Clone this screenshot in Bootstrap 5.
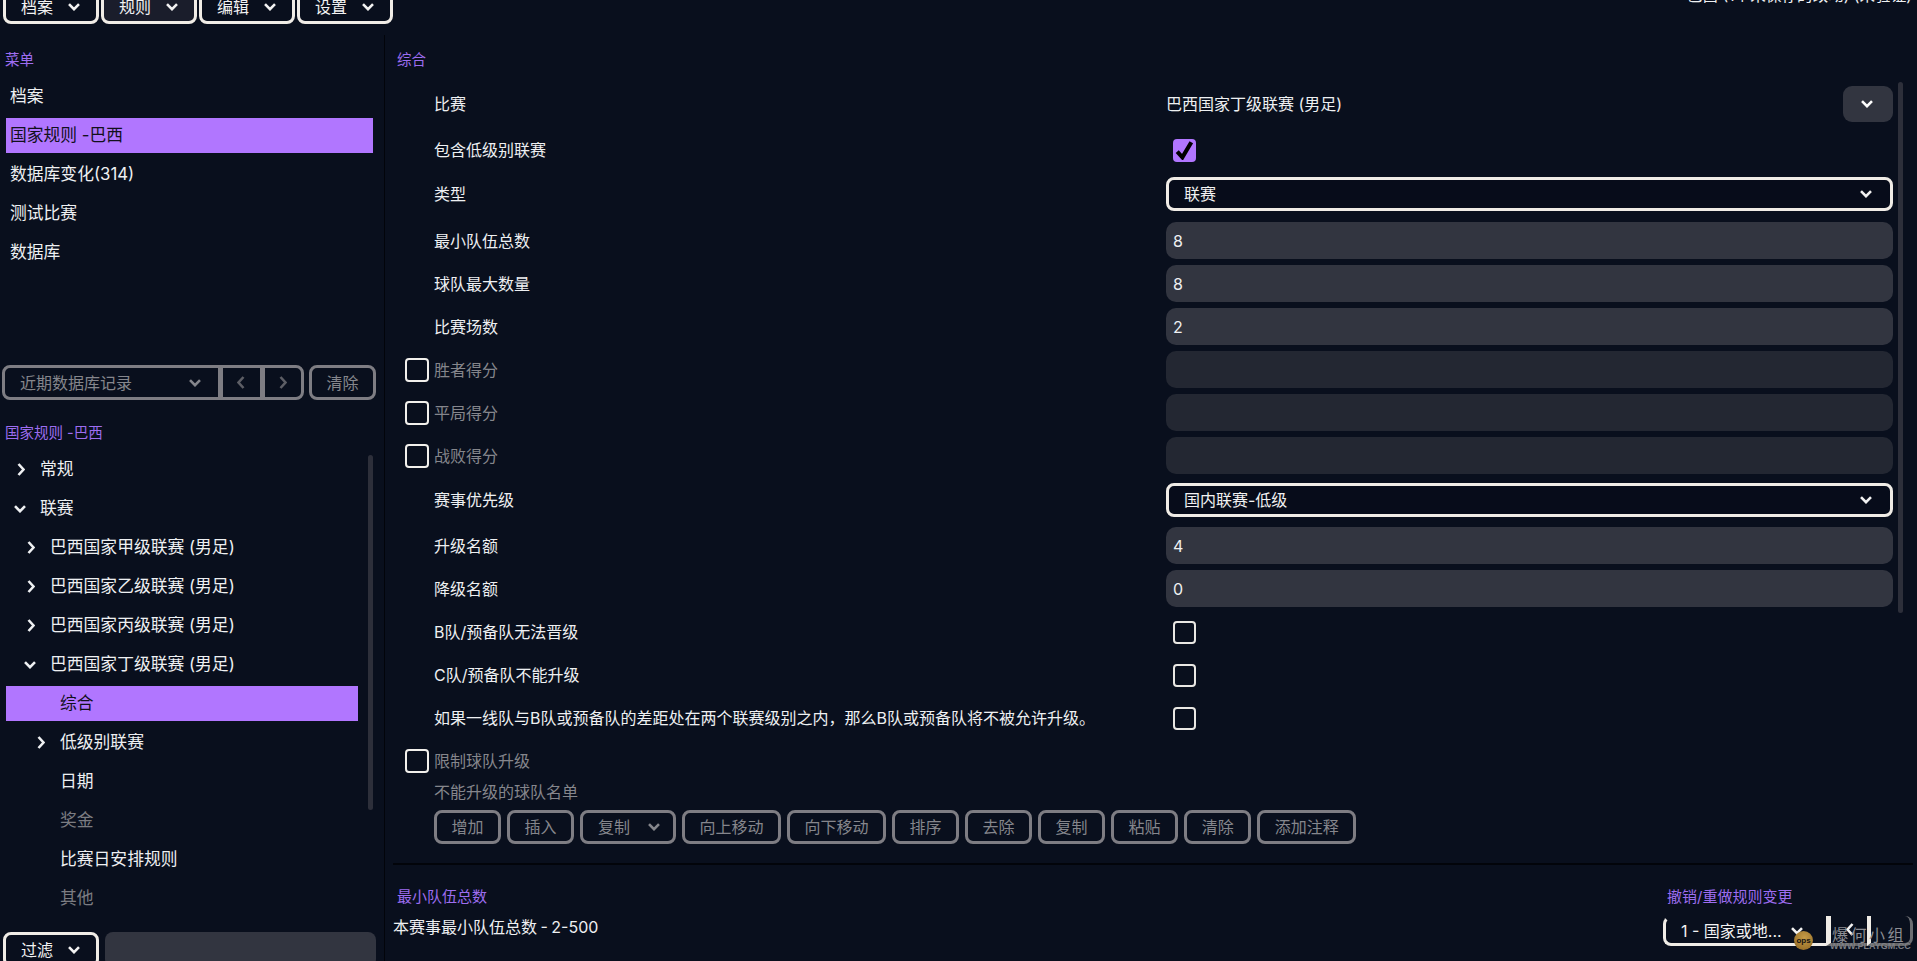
<!DOCTYPE html>
<html lang="zh-CN">
<head>
<meta charset="utf-8">
<title>规则</title>
<link href="https://cdn.jsdelivr.net/npm/bootstrap@5.3.0/dist/css/bootstrap.min.css" rel="stylesheet">
<style>
:root{--accent:#b176ff;--page:#090f1d;--fill:#323540;--fill-off:#232732;--line:#f0ece6;--off:#7e7d83;--off-text:#85868c;}
html,body{height:100%;}
body{background:var(--page);color:#eef0f2;font-family:Inter,"Noto Sans CJK SC",sans-serif;font-size:16px;overflow:hidden;}
.shell{height:961px;overflow:hidden;}
.topbar{height:35px;padding:0 5px 0 3px;}
.topgroup{margin-top:-11px;gap:2px;}
.bt{--bs-btn-color:#f2f2f2;--bs-btn-bg:transparent;--bs-btn-border-color:var(--line);--bs-btn-border-width:3px;--bs-btn-border-radius:8px;--bs-btn-font-size:16px;--bs-btn-padding-y:0;--bs-btn-padding-x:14.5px;--bs-btn-hover-color:#f2f2f2;--bs-btn-hover-bg:transparent;--bs-btn-hover-border-color:var(--line);height:34px;line-height:1;display:inline-flex;align-items:center;justify-content:center;white-space:nowrap;}
.bt-top{width:96px;height:35px;justify-content:space-between;padding:0 16px 0 15px;}
.bt-hover{--bs-btn-bg:#1a1d2b;--bs-btn-hover-bg:#1a1d2b;}
.bt-off{--bs-btn-color:var(--off-text);--bs-btn-border-color:var(--off);--bs-btn-hover-color:var(--off-text);--bs-btn-hover-border-color:var(--off);}
.cv{width:12px;height:8px;flex:none;fill:none;stroke:currentColor;stroke-width:2.6;}
.cv-side{width:8px;height:13px;flex:none;fill:none;stroke:currentColor;stroke-width:2.6;}
.topnote{margin-top:-16px;line-height:24px;font-size:15.6px;white-space:nowrap;}
.sidepane{width:385px;flex:none;border-right:1px solid #02040a;height:926px;padding-top:13px;position:relative;}
.paneltitle{color:#9d6df0;font-size:14.5px;line-height:24px;}
.sidepane>.paneltitle{margin-left:5px;}
.menulist{margin:7px 11px 0 6px;height:286px;}
.rowitem{height:35px;margin-bottom:4px;display:flex;align-items:center;font-size:16.8px;white-space:nowrap;}
.rowitem.on{background:var(--accent);color:#12101c;}
.menulist .rowitem{padding-left:4px;}
.histgroup{margin-left:2px;}
.histgroup .btn-group{width:302px;}
.bt-hist{width:219px;height:35px;justify-content:space-between;padding:0 17px 0 15px;}
.bt-nav{width:42px;height:35px;padding:0;--bs-btn-color:#5d5e65;--bs-btn-hover-color:#5d5e65;}
.bt-clear{width:67px;height:35px;margin-left:5px;padding:0;}
.tree-title{margin:21px 0 7px 5px;}
.treewrap{height:480px;}
.treelist{margin:0 26px 0 6px;}
.arrow{width:34px;padding-left:11px;flex:none;display:flex;}
.arrow .cv{margin-left:-3px;}
.lv1{padding-left:0;}
.lv2{padding-left:10px;}
.lv3{padding-left:20px;}
.dim{color:#7b7c82;}
.vbar{position:absolute;background:#2d2f3a;border-radius:3px;width:5px;}
.vbar-left{right:11px;top:420px;height:355px;}
.vbar-right{right:14px;top:47px;height:531px;}
.filterrow{margin:0 8px 0 3px;gap:6px;}
.bt-filter{width:96px;height:35px;justify-content:space-between;padding:0 16px 0 15px;}
.searchbox{flex:1;height:35px;background:var(--fill);border-radius:8px;}
.mainpane{flex:1;padding-top:13px;position:relative;min-width:0;height:926px;}
.mainpane>.paneltitle{margin-left:12px;}
.formrows{margin-left:20px;}
.frow{display:flex;align-items:center;white-space:nowrap;}
.slot{width:29px;flex:none;display:flex;}
.flabel{width:732px;flex:none;line-height:24px;}
.fctrl{width:727px;flex:none;}
.field{width:100%;height:37px;background:var(--fill);border:0;border-radius:10px;color:#eef0f2;padding:0 7px;font-size:16px;display:block;}
.field:disabled{background:var(--fill-off);}
.field:focus{outline:0;}
.bt-select{width:100%;justify-content:space-between;padding:0 18px 0 15px;height:34px;background:#070c1a;}
.plainselect{height:36px;display:flex;align-items:center;justify-content:space-between;}
.minibtn{width:50px;height:36px;background:var(--fill);border-radius:9px;color:#fff;display:flex;align-items:center;justify-content:center;padding-right:2px;}
input.tick{width:23px;height:23px;margin:0;flex:none;background-color:transparent;border:2px solid #e9e7e3;border-radius:5px;box-shadow:none;}
.slot input.tick{border-color:#f2f0ec;width:24px;height:24px;margin-left:0;}
input.tick:checked{background-color:var(--accent);border-color:var(--accent);background-size:22px;background-image:url("data:image/svg+xml,%3csvg xmlns='http://www.w3.org/2000/svg' viewBox='0 0 24 24'%3e%3cpath fill='none' stroke='%23000' stroke-width='4.4' d='M4 13l5.5 6L19 3'/%3e%3c/svg%3e");}
.tickpad{padding-left:7px;display:flex;}
.lbl-off{color:var(--off-text);}
.m6{margin-top:6px;}.m9{margin-top:9px;}.m10{margin-top:10px;}.m11{margin-top:11px;}.m13{margin-top:13px;}.m15{margin-top:15px;}.m16{margin-top:16px;}.m19{margin-top:19px;}.m7{margin-top:7px;}.first{margin-top:14px;}
.btnrow{margin-left:29px;margin-top:6px;gap:6px;}
.bt-wide{width:96px;padding:0 13px 0 15px;justify-content:space-between;}
.divline{height:2px;background:#02040a;margin:19px 4px 0 8px;}
.foot{padding:20px 4px 0 8px;}
.foot .paneltitle{margin-left:4px;font-size:15px;}
.footdesc{margin-top:6px;line-height:24px;word-spacing:-1px;}
.undo{width:250px;}
.undotitle{margin:0 0 7px 4px;line-height:24px;}
.undogroup{width:250px;height:30px;}
.undogroup .bt{height:30px;flex:none;}
.undogroup .u1{width:164px;justify-content:space-between;padding:0 24px 0 15px;border-top-color:transparent;border-right:0;}
.undogroup .u2{width:42px;margin-left:0;padding:0;border-top:0;border-left:5px solid var(--line);border-right:0;border-bottom-color:#666;}
.undogroup .u3{flex:1 1 auto;margin-left:0;padding:0;border-top:0;border-left:4px solid var(--line);border-right-color:#6d6e73;border-bottom-color:#666;}
.wm-ball{position:absolute;left:1794px;top:931px;width:19px;height:19px;border-radius:50%;background:radial-gradient(circle at 55% 35%,#c69b47,#8b6420);color:#111;font:700 8px/19px "Liberation Sans",sans-serif;text-align:center;}
.wm-name{position:absolute;left:1832px;top:923px;color:#8d8e94;font-size:16px;line-height:22px;letter-spacing:2.5px;font-family:"Noto Sans CJK SC",serif;white-space:nowrap;}
.wm-url{position:absolute;left:1830px;top:940px;color:#7f8086;font:700 9px/12px "Liberation Sans",sans-serif;white-space:nowrap;}
</style>
</head>
<body>
<svg width="0" height="0" class="position-absolute">
  <symbol id="down" viewBox="0 0 12 8"><path d="M1 1.2l5 5 5-5"/></symbol>
  <symbol id="right" viewBox="0 0 8 13"><path d="M1.5 1l5 5.5-5 5.5"/></symbol>
  <symbol id="left" viewBox="0 0 8 13"><path d="M6.5 1l-5 5.5 5 5.5"/></symbol>
</svg>
<div class="shell d-flex flex-column">
  <header class="topbar d-flex justify-content-between">
    <div class="topgroup d-flex">
      <button class="btn bt bt-top">档案<svg class="cv"><use href="#down"/></svg></button>
      <button class="btn bt bt-top bt-hover">规则<svg class="cv"><use href="#down"/></svg></button>
      <button class="btn bt bt-top">编辑<svg class="cv"><use href="#down"/></svg></button>
      <button class="btn bt bt-top">设置<svg class="cv"><use href="#down"/></svg></button>
    </div>
    <div class="topnote">巴西 (1个未保存的改动) (未验证)</div>
  </header>
  <div class="d-flex flex-grow-1">
    <aside class="sidepane">
      <div class="paneltitle">菜单</div>
      <div class="menulist">
        <div class="rowitem">档案</div>
        <div class="rowitem on">国家规则 -巴西</div>
        <div class="rowitem">数据库变化(314)</div>
        <div class="rowitem">测试比赛</div>
        <div class="rowitem">数据库</div>
      </div>
      <div class="histgroup d-flex">
        <div class="btn-group">
          <button class="btn bt bt-off bt-hist">近期数据库记录<svg class="cv"><use href="#down"/></svg></button>
          <button class="btn bt bt-off bt-nav"><svg class="cv-side"><use href="#left"/></svg></button>
          <button class="btn bt bt-off bt-nav"><svg class="cv-side"><use href="#right"/></svg></button>
        </div>
        <button class="btn bt bt-off bt-clear">清除</button>
      </div>
      <div class="paneltitle tree-title">国家规则 -巴西</div>
      <div class="treewrap">
        <div class="treelist">
          <div class="rowitem lv1"><span class="arrow"><svg class="cv-side"><use href="#right"/></svg></span>常规</div>
          <div class="rowitem lv1"><span class="arrow"><svg class="cv"><use href="#down"/></svg></span>联赛</div>
          <div class="rowitem lv2"><span class="arrow"><svg class="cv-side"><use href="#right"/></svg></span>巴西国家甲级联赛 (男足)</div>
          <div class="rowitem lv2"><span class="arrow"><svg class="cv-side"><use href="#right"/></svg></span>巴西国家乙级联赛 (男足)</div>
          <div class="rowitem lv2"><span class="arrow"><svg class="cv-side"><use href="#right"/></svg></span>巴西国家丙级联赛 (男足)</div>
          <div class="rowitem lv2"><span class="arrow"><svg class="cv"><use href="#down"/></svg></span>巴西国家丁级联赛 (男足)</div>
          <div class="rowitem lv3 on"><span class="arrow"></span>综合</div>
          <div class="rowitem lv3"><span class="arrow"><svg class="cv-side"><use href="#right"/></svg></span>低级别联赛</div>
          <div class="rowitem lv3"><span class="arrow"></span>日期</div>
          <div class="rowitem lv3 dim"><span class="arrow"></span>奖金</div>
          <div class="rowitem lv3"><span class="arrow"></span>比赛日安排规则</div>
          <div class="rowitem lv3 dim"><span class="arrow"></span>其他</div>
        </div>
      </div>
      <div class="vbar vbar-left"></div>
      <div class="filterrow d-flex">
        <button class="btn bt bt-filter">过滤<svg class="cv"><use href="#down"/></svg></button>
        <div class="searchbox"></div>
      </div>
    </aside>
    <main class="mainpane">
      <div class="paneltitle">综合</div>
      <div class="formrows">
        <div class="frow first"><span class="slot"></span><span class="flabel">比赛</span>
          <div class="fctrl plainselect"><span>巴西国家丁级联赛 (男足)</span><span class="minibtn"><svg class="cv"><use href="#down"/></svg></span></div></div>
        <div class="frow m16"><span class="slot"></span><span class="flabel">包含低级别联赛</span>
          <div class="fctrl tickpad"><input class="form-check-input tick" type="checkbox" checked></div></div>
        <div class="frow m15"><span class="slot"></span><span class="flabel">类型</span>
          <div class="fctrl"><button class="btn bt bt-select">联赛<svg class="cv"><use href="#down"/></svg></button></div></div>
        <div class="frow m11"><span class="slot"></span><span class="flabel">最小队伍总数</span>
          <div class="fctrl"><input class="field" value="8"></div></div>
        <div class="frow m6"><span class="slot"></span><span class="flabel">球队最大数量</span>
          <div class="fctrl"><input class="field" value="8"></div></div>
        <div class="frow m6"><span class="slot"></span><span class="flabel">比赛场数</span>
          <div class="fctrl"><input class="field" value="2"></div></div>
        <div class="frow m6"><span class="slot"><input class="form-check-input tick" type="checkbox"></span><span class="flabel lbl-off">胜者得分</span>
          <div class="fctrl"><input class="field" disabled></div></div>
        <div class="frow m6"><span class="slot"><input class="form-check-input tick" type="checkbox"></span><span class="flabel lbl-off">平局得分</span>
          <div class="fctrl"><input class="field" disabled></div></div>
        <div class="frow m6"><span class="slot"><input class="form-check-input tick" type="checkbox"></span><span class="flabel lbl-off">战败得分</span>
          <div class="fctrl"><input class="field" disabled></div></div>
        <div class="frow m9"><span class="slot"></span><span class="flabel">赛事优先级</span>
          <div class="fctrl"><button class="btn bt bt-select">国内联赛-低级<svg class="cv"><use href="#down"/></svg></button></div></div>
        <div class="frow m10"><span class="slot"></span><span class="flabel">升级名额</span>
          <div class="fctrl"><input class="field" value="4"></div></div>
        <div class="frow m6"><span class="slot"></span><span class="flabel">降级名额</span>
          <div class="fctrl"><input class="field" value="0"></div></div>
        <div class="frow m13"><span class="slot"></span><span class="flabel">B队/预备队无法晋级</span>
          <div class="fctrl tickpad"><input class="form-check-input tick" type="checkbox"></div></div>
        <div class="frow m19"><span class="slot"></span><span class="flabel">C队/预备队不能升级</span>
          <div class="fctrl tickpad"><input class="form-check-input tick" type="checkbox"></div></div>
        <div class="frow m19"><span class="slot"></span><span class="flabel">如果一线队与B队或预备队的差距处在两个联赛级别之内，那么B队或预备队将不被允许升级。</span>
          <div class="fctrl tickpad"><input class="form-check-input tick" type="checkbox"></div></div>
        <div class="frow m19"><span class="slot"><input class="form-check-input tick" type="checkbox"></span><span class="flabel lbl-off">限制球队升级</span></div>
        <div class="frow m7"><span class="slot"></span><span class="flabel lbl-off">不能升级的球队名单</span></div>
        <div class="btnrow d-flex">
          <button class="btn bt bt-off">增加</button>
          <button class="btn bt bt-off">插入</button>
          <button class="btn bt bt-off bt-wide">复制<svg class="cv"><use href="#down"/></svg></button>
          <button class="btn bt bt-off">向上移动</button>
          <button class="btn bt bt-off">向下移动</button>
          <button class="btn bt bt-off">排序</button>
          <button class="btn bt bt-off">去除</button>
          <button class="btn bt bt-off">复制</button>
          <button class="btn bt bt-off">粘贴</button>
          <button class="btn bt bt-off">清除</button>
          <button class="btn bt bt-off">添加注释</button>
        </div>
      </div>
      <div class="divline"></div>
      <div class="foot d-flex justify-content-between">
        <div>
          <div class="paneltitle">最小队伍总数</div>
          <div class="footdesc">本赛事最小队伍总数 - 2-500</div>
        </div>
        <div class="undo">
          <div class="paneltitle undotitle">撤销/重做规则变更</div>
          <div class="btn-group undogroup">
            <button class="btn bt u1">1 - 国家或地...<svg class="cv"><use href="#down"/></svg></button>
            <button class="btn bt u2"><svg class="cv-side"><use href="#left"/></svg></button>
            <button class="btn bt u3"></button>
          </div>
        </div>
      </div>
      <div class="vbar vbar-right"></div>
    </main>
  </div>
</div>
<div class="wm-ball">ops</div>
<div class="wm-name">爆何小组</div>
<div class="wm-url">WWW.PLAYGM.CC</div>
<script src="https://cdn.jsdelivr.net/npm/bootstrap@5.3.0/dist/js/bootstrap.bundle.min.js"></script>
</body>
</html>
